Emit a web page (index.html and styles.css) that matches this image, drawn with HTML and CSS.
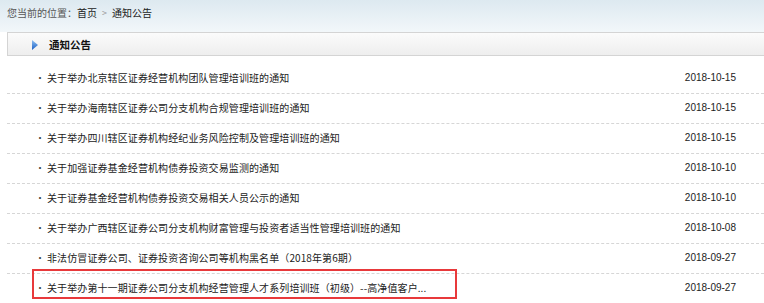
FILE: index.html
```html
<!DOCTYPE html>
<html lang="zh-CN">
<head>
    <meta charset="UTF-8">
    <title>通知公告</title>
    <link rel="stylesheet" href="styles.css">
</head>
<body>

<div class="page">
    <div class="crumb">
        <span class="crumb-label">您当前的位置：</span><a href="#">首页</a>
        <span class="crumb-sep">&gt;</span>
        <a href="#">通知公告</a>
    </div>

    <div class="panel">
        <div class="panel-head">
            <svg class="arrow" width="6" height="10" viewBox="0 0 6 10">
                <defs>
                    <linearGradient id="ag" x1="0" y1="0" x2="0" y2="1">
                        <stop offset="0" stop-color="#8fc0f2"/>
                        <stop offset="1" stop-color="#1b5fc4"/>
                    </linearGradient>
                </defs>
                <polygon points="0,0 6,5 0,10" fill="url(#ag)"/>
            </svg>
            <span class="panel-title">通知公告</span>
        </div>

        <ul class="news">
            <li><span class="dot">·</span><a class="title" href="#">关于举办北京辖区证券经营机构团队管理培训班的通知</a><span class="date">2018-10-15</span></li>
            <li><span class="dot">·</span><a class="title" href="#">关于举办海南辖区证券公司分支机构合规管理培训班的通知</a><span class="date">2018-10-15</span></li>
            <li><span class="dot">·</span><a class="title" href="#">关于举办四川辖区证券机构经纪业务风险控制及管理培训班的通知</a><span class="date">2018-10-15</span></li>
            <li><span class="dot">·</span><a class="title" href="#">关于加强证券基金经营机构债券投资交易监测的通知</a><span class="date">2018-10-10</span></li>
            <li><span class="dot">·</span><a class="title" href="#">关于证券基金经营机构债券投资交易相关人员公示的通知</a><span class="date">2018-10-10</span></li>
            <li><span class="dot">·</span><a class="title" href="#">关于举办广西辖区证券公司分支机构财富管理与投资者适当性管理培训班的通知</a><span class="date">2018-10-08</span></li>
            <li><span class="dot">·</span><a class="title" href="#">非法仿冒证券公司、证券投资咨询公司等机构黑名单（2018年第6期）</a><span class="date">2018-09-27</span></li>
            <li class="marked"><span class="dot">·</span><a class="title" href="#">关于举办第十一期证券公司分支机构经营管理人才系列培训班（初级）--高净值客户...</a><span class="date">2018-09-27</span><span class="mark"></span></li>
        </ul>
    </div>
</div>

</body>
</html>
```

FILE: styles.css
```css
body {
    margin: 0;
    overflow: hidden;
    font-family: "Noto Sans CJK SC", "Liberation Sans", sans-serif;
    font-size: 10px;
    color: #222;
}

a {
    color: #222;
    text-decoration: none;
}

/* top area with breadcrumb */
.page {
    background: linear-gradient(#dde9f0 0, #f2f7fa 32px, #ffffff 32px);
    height: 303px;
}

.crumb {
    height: 26px;
    line-height: 24px;
    padding-left: 7px;
    display: flex;
    align-items: center;
}

.crumb-label {
    color: #555;
}

.crumb-sep {
    color: #999;
    margin: 0 5px;
    font-size: 9px;
}

/* panel */
.panel {
    margin: 6px 0 0 7px;
}

.panel-head {
    height: 22px;
    border: 1px solid #d4d4d4;
    border-right: none;
    background: linear-gradient(#fbfbfb, #eeeeee);
    display: flex;
    align-items: center;
}

.arrow {
    margin-left: 24px;
    margin-top: 1px;
}

.panel-title {
    margin-left: 11px;
    font-weight: bold;
    font-size: 10.5px;
    color: #111;
}

/* news list */
.news {
    list-style: none;
    margin: 0;
    padding: 8px 0 0 0;
}

.news li {
    position: relative;
    height: 26px;
    border-bottom: 1px dashed #d6d6d6;
    display: flex;
    align-items: center;
    padding: 0 28px 3px 28px;
}

.dot {
    width: 12px;
    color: #444;
}

.title {
    flex: 1;
    letter-spacing: 0.1px;
}

.date {
    font-family: "Liberation Sans", sans-serif;
    font-size: 10px;
    color: #222;
}

/* red highlight around the last item */
.mark {
    position: absolute;
    left: 25px;
    top: -5px;
    width: 421px;
    height: 26px;
    border: 2px solid #e8393b;
}
```
